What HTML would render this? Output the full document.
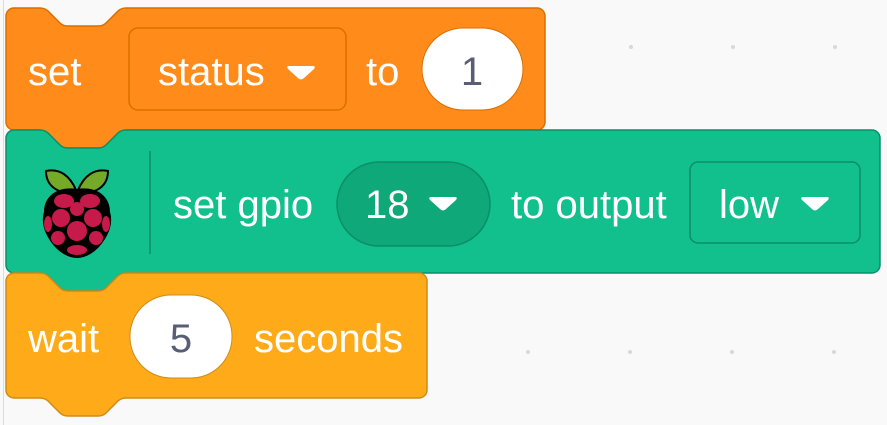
<!DOCTYPE html>
<html><head><style>
html,body{margin:0;padding:0;width:887px;height:425px;overflow:hidden;background:#f9f9f9}
svg{display:block}
text{font-family:"Liberation Sans",Arial,sans-serif;font-size:40px;fill:#fff}
</style></head><body>
<svg width="887" height="425" viewBox="0 0 887 425" xmlns="http://www.w3.org/2000/svg">
<rect x="0" y="0" width="887" height="425" fill="#f9f9f9"/>
<line x1="3.5" y1="0" x2="3.5" y2="425" stroke="#dcdcdc" stroke-width="1"/>
<g fill="#d8d8d8">
<circle cx="631" cy="47" r="2"/><circle cx="733" cy="47" r="2"/><circle cx="835" cy="47" r="2"/>
<circle cx="528" cy="352" r="2"/><circle cx="630" cy="352" r="2"/><circle cx="732" cy="352" r="2"/><circle cx="834" cy="352" r="2"/>
</g>
<path d="M6 16 a8 8 0 0 1 8 -8 L40 8 Q46 8 50 13 L60 23 Q63 26 68 26 L98 26 Q103 26 106 23 L116 13 Q120 8 126 8 L537 8 a8 8 0 0 1 8 8 L545 122 a8 8 0 0 1 -8 8 L126 130 Q120 130 116 135 L106 145 Q103 148 98 148 L68 148 Q63 148 60 145 L50 135 Q46 130 40 130 L14 130 a8 8 0 0 1 -8 -8 Z" fill="#FF8C1A" stroke="#DB6E00" stroke-width="1.5"/>
<path d="M6 138 a8 8 0 0 1 8 -8 L40 130 Q46 130 50 135 L60 145 Q63 148 68 148 L98 148 Q103 148 106 145 L116 135 Q120 130 126 130 L872 130 a8 8 0 0 1 8 8 L880 265 a8 8 0 0 1 -8 8 L126 273 Q120 273 116 278 L106 288 Q103 291 98 291 L68 291 Q63 291 60 288 L50 278 Q46 273 40 273 L14 273 a8 8 0 0 1 -8 -8 Z" fill="#12C08E" stroke="#0B8E69" stroke-width="1.5"/>
<path d="M6 281 a8 8 0 0 1 8 -8 L40 273 Q46 273 50 278 L60 288 Q63 291 68 291 L98 291 Q103 291 106 288 L116 278 Q120 273 126 273 L419 273 a8 8 0 0 1 8 8 L427 390 a8 8 0 0 1 -8 8 L126 398 Q120 398 116 403 L106 413 Q103 416 98 416 L68 416 Q63 416 60 413 L50 403 Q46 398 40 398 L14 398 a8 8 0 0 1 -8 -8 Z" fill="#FFAB19" stroke="#CF8B17" stroke-width="1.5"/>

<text x="28" y="85">set</text>
<rect x="129" y="28" width="217" height="82" rx="9" fill="#FF8C1A" stroke="#DB6E00" stroke-width="1.5"/>
<text x="158" y="85">status</text>
<path d="M289 66 L313 66 Q316 66 314 69 L304 78 Q301 81 298 78 L288 69 Q286 66 289 66 Z" fill="#fff"/>
<text x="366" y="85">to</text>
<rect x="422" y="28" width="101" height="82" rx="41" fill="#fff" stroke="#DB6E00" stroke-width="1"/>
<text x="472" y="85" text-anchor="middle" style="fill:#575E75">1</text>

<g>
<path d="M76 190 C70 176 60 168 46 171 C46 185 56 193 72 193 Z" fill="#75A928" stroke="#000" stroke-width="2"/>
<path d="M78 190 C84 176 94 168 108 171 C108 185 98 193 82 193 Z" fill="#75A928" stroke="#000" stroke-width="2"/>
<path d="M77 189 C95 186 110 195 110 212 C113 222 110 232 103 242 C96 252 86 258 77 258 C68 258 58 252 51 242 C44 232 41 222 44 212 C44 195 59 186 77 189 Z" fill="#000"/>
<g fill="#C51A4A">
<ellipse cx="64" cy="201" rx="10" ry="7"/><ellipse cx="90" cy="201" rx="10" ry="7"/>
<circle cx="61" cy="218" r="9"/><circle cx="93" cy="218" r="9"/><circle cx="77" cy="209" r="7"/>
<ellipse cx="48" cy="224" rx="4" ry="8"/><ellipse cx="106" cy="224" rx="4" ry="8"/>
<circle cx="77" cy="231" r="10"/>
<circle cx="58" cy="238" r="7"/><circle cx="96" cy="238" r="7"/>
<ellipse cx="77" cy="250" rx="10" ry="5"/>
</g>
</g>
<line x1="150" y1="151" x2="150" y2="254" stroke="#0B8E69" stroke-width="1.5"/>
<text x="173" y="218">set gpio</text>
<rect x="337" y="162" width="153" height="84" rx="42" fill="#0EA879" stroke="#0B8E69" stroke-width="1.5"/>
<text x="365" y="218">18</text>
<path d="M431 197 L455 197 Q458 197 456 200 L446 209 Q443 212 440 209 L430 200 Q428 197 431 197 Z" fill="#fff"/>
<text x="511" y="218">to output</text>
<rect x="690" y="162" width="170" height="81" rx="8" fill="#12C08E" stroke="#0B8E69" stroke-width="1.5"/>
<text x="719" y="218">low</text>
<path d="M803 197 L827 197 Q830 197 828 200 L818 209 Q815 212 812 209 L802 200 Q800 197 803 197 Z" fill="#fff"/>

<text x="28" y="352">wait</text>
<rect x="130" y="295" width="102" height="83" rx="41" fill="#fff" stroke="#CF8B17" stroke-width="1"/>
<text x="181" y="352" text-anchor="middle" style="fill:#575E75">5</text>
<text x="254" y="352">seconds</text>
</svg>
</body></html>
